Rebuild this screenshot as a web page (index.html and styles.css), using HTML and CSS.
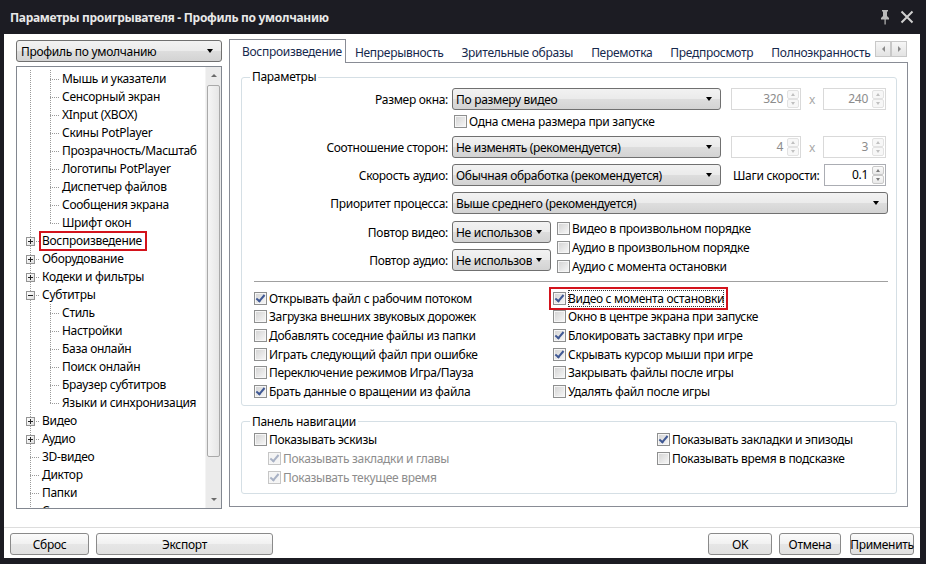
FILE: index.html
```html
<!DOCTYPE html>
<html lang="ru">
<head>
<meta charset="utf-8">
<title>Параметры проигрывателя</title>
<link rel="stylesheet" href="styles.css">
</head>
<body>
<div class="window">
  <div class="titlebar">
    <span class="title">Параметры проигрывателя - Профиль по умолчанию</span>
    <span class="tb-icons">
      <svg class="pin" width="12" height="16" viewBox="0 0 12 16"><path d="M3 1h6v1.5H8v4.5l2 2v1.5H2V9l2-2V2.5H3z" fill="#b9b9b9"/><rect x="5.5" y="10" width="1.2" height="5.5" fill="#b9b9b9"/></svg>
      <svg class="close" width="14" height="14" viewBox="0 0 14 14"><path d="M1.5 1.5L12.5 12.5M12.5 1.5L1.5 12.5" stroke="#cfcfcf" stroke-width="2"/></svg>
    </span>
  </div>
  <div class="client">
    <div class="main">
      <div class="leftcol">
        <div class="combo profile"><span class="txt">Профиль по умолчанию</span><i class="arr"></i></div>
        <div class="tree">
          <div class="tree-rows">
            <div class="row"><span class="g v"></span><span class="g t"></span><span class="lbl">Мышь и указатели</span></div>
            <div class="row"><span class="g v"></span><span class="g t"></span><span class="lbl">Сенсорный экран</span></div>
            <div class="row"><span class="g v"></span><span class="g t"></span><span class="lbl">XInput (XBOX)</span></div>
            <div class="row"><span class="g v"></span><span class="g t"></span><span class="lbl">Скины PotPlayer</span></div>
            <div class="row"><span class="g v"></span><span class="g t"></span><span class="lbl">Прозрачность/Масштаб</span></div>
            <div class="row"><span class="g v"></span><span class="g t"></span><span class="lbl">Логотипы PotPlayer</span></div>
            <div class="row"><span class="g v"></span><span class="g t"></span><span class="lbl">Диспетчер файлов</span></div>
            <div class="row"><span class="g v"></span><span class="g t"></span><span class="lbl">Сообщения экрана</span></div>
            <div class="row"><span class="g v"></span><span class="g l"></span><span class="lbl">Шрифт окон</span></div>
            <div class="row"><span class="g t"><i class="bx plus"></i></span><span class="lbl mark">Воспроизведение</span></div>
            <div class="row"><span class="g t"><i class="bx plus"></i></span><span class="lbl">Оборудование</span></div>
            <div class="row"><span class="g t"><i class="bx plus"></i></span><span class="lbl">Кодеки и фильтры</span></div>
            <div class="row"><span class="g t"><i class="bx minus"></i></span><span class="lbl">Субтитры</span></div>
            <div class="row"><span class="g v"></span><span class="g t"></span><span class="lbl">Стиль</span></div>
            <div class="row"><span class="g v"></span><span class="g t"></span><span class="lbl">Настройки</span></div>
            <div class="row"><span class="g v"></span><span class="g t"></span><span class="lbl">База онлайн</span></div>
            <div class="row"><span class="g v"></span><span class="g t"></span><span class="lbl">Поиск онлайн</span></div>
            <div class="row"><span class="g v"></span><span class="g t"></span><span class="lbl">Браузер субтитров</span></div>
            <div class="row"><span class="g v"></span><span class="g l"></span><span class="lbl">Языки и синхронизация</span></div>
            <div class="row"><span class="g t"><i class="bx plus"></i></span><span class="lbl">Видео</span></div>
            <div class="row"><span class="g t"><i class="bx plus"></i></span><span class="lbl">Аудио</span></div>
            <div class="row"><span class="g t"></span><span class="lbl">3D-видео</span></div>
            <div class="row"><span class="g t"></span><span class="lbl">Диктор</span></div>
            <div class="row"><span class="g t"></span><span class="lbl">Папки</span></div>
            <div class="row"><span class="g t"></span><span class="lbl">Связи</span></div>
          </div>
          <div class="vscroll">
            <div class="sb-btn"><i class="up"></i></div>
            <div class="thumb"></div>
            <div class="track"></div>
            <div class="sb-btn"><i class="down"></i></div>
          </div>
        </div>
      </div>

      <div class="rightcol">
        <div class="tabs">
          <div class="tabstrip">
            <div class="tab active">Воспроизведение</div>
            <div class="tab">Непрерывность</div>
            <div class="tab">Зрительные образы</div>
            <div class="tab">Перемотка</div>
            <div class="tab">Предпросмотр</div>
            <div class="tab">Полноэкранность</div>
          </div>
          <div class="tabscroll">
            <div class="ts-btn"><i class="la"></i></div>
            <div class="ts-btn"><i class="ra"></i></div>
          </div>
        </div>
        <div class="panel">
          <fieldset class="grp params">
            <legend>Параметры</legend>
            <div class="frow">
              <span class="flabel">Размер окна:</span>
              <div class="combo w269"><span class="txt">По размеру видео</span><i class="arr"></i></div>
              <div class="spin dis w70 ml10"><span class="val">320</span><span class="btns"><i class="sbu"></i><i class="sbd"></i></span></div>
              <span class="times">x</span>
              <div class="spin dis w63"><span class="val">240</span><span class="btns"><i class="sbu"></i><i class="sbd"></i></span></div>
            </div>
            <div class="cbrow">
              <label class="ck"><i class="cb"></i><span>Одна смена размера при запуске</span></label>
            </div>
            <div class="frow">
              <span class="flabel">Соотношение сторон:</span>
              <div class="combo w269"><span class="txt">Не изменять (рекомендуется)</span><i class="arr"></i></div>
              <div class="spin dis w70 ml10"><span class="val">4</span><span class="btns"><i class="sbu"></i><i class="sbd"></i></span></div>
              <span class="times">x</span>
              <div class="spin dis w63"><span class="val">3</span><span class="btns"><i class="sbu"></i><i class="sbd"></i></span></div>
            </div>
            <div class="frow">
              <span class="flabel">Скорость аудио:</span>
              <div class="combo w269"><span class="txt">Обычная обработка (рекомендуется)</span><i class="arr"></i></div>
              <span class="steps">Шаги скорости:</span>
              <div class="spin w62 push"><span class="val">0.1</span><span class="btns"><i class="sbu"></i><i class="sbd"></i></span></div>
            </div>
            <div class="frow last">
              <span class="flabel">Приоритет процесса:</span>
              <div class="combo w436"><span class="txt">Выше среднего (рекомендуется)</span><i class="arr"></i></div>
            </div>
            <div class="repeat">
              <div class="rep-left">
                <div class="frow">
                  <span class="flabel">Повтор видео:</span>
                  <div class="combo w99"><span class="txt">Не использов</span><i class="arr"></i></div>
                </div>
                <div class="frow">
                  <span class="flabel">Повтор аудио:</span>
                  <div class="combo w99"><span class="txt">Не использов</span><i class="arr"></i></div>
                </div>
              </div>
              <div class="rep-right">
                <label class="ck"><i class="cb"></i><span>Видео в произвольном порядке</span></label>
                <label class="ck"><i class="cb"></i><span>Аудио в произвольном порядке</span></label>
                <label class="ck"><i class="cb"></i><span>Аудио с момента остановки</span></label>
              </div>
            </div>
            <div class="sep"></div>
            <div class="cbgrid">
              <label class="ck"><i class="cb on"></i><span>Открывать файл с рабочим потоком</span></label>
              <label class="ck hl"><i class="cb on"></i><span class="focus">Видео с момента остановки</span></label>
              <label class="ck"><i class="cb"></i><span>Загрузка внешних звуковых дорожек</span></label>
              <label class="ck"><i class="cb"></i><span>Окно в центре экрана при запуске</span></label>
              <label class="ck"><i class="cb"></i><span>Добавлять соседние файлы из папки</span></label>
              <label class="ck"><i class="cb on"></i><span>Блокировать заставку при игре</span></label>
              <label class="ck"><i class="cb"></i><span>Играть следующий файл при ошибке</span></label>
              <label class="ck"><i class="cb on"></i><span>Скрывать курсор мыши при игре</span></label>
              <label class="ck"><i class="cb"></i><span>Переключение режимов Игра/Пауза</span></label>
              <label class="ck"><i class="cb"></i><span>Закрывать файлы после игры</span></label>
              <label class="ck"><i class="cb on"></i><span>Брать данные о вращении из файла</span></label>
              <label class="ck"><i class="cb"></i><span>Удалять файл после игры</span></label>
            </div>
          </fieldset>

          <fieldset class="grp nav">
            <legend>Панель навигации</legend>
            <div class="navgrid">
              <label class="ck"><i class="cb"></i><span>Показывать эскизы</span></label>
              <label class="ck"><i class="cb on"></i><span>Показывать закладки и эпизоды</span></label>
              <label class="ck ind disabled"><i class="cb on dis"></i><span>Показывать закладки и главы</span></label>
              <label class="ck"><i class="cb"></i><span>Показывать время в подсказке</span></label>
              <label class="ck ind disabled"><i class="cb on dis"></i><span>Показывать текущее время</span></label>
            </div>
          </fieldset>
        </div>
      </div>
    </div>

    <div class="footer">
      <button class="btn w79">Сброс</button>
      <button class="btn w177">Экспорт</button>
      <span class="spacer"></span>
      <button class="btn w64">OK</button>
      <button class="btn w62">Отмена</button>
      <button class="btn w64 apply">Применить</button>
    </div>
  </div>
</div>
</body>
</html>
```

FILE: styles.css
```css
* { box-sizing: border-box; }
html, body { margin: 0; padding: 0; }
body {
  width: 926px;
  height: 564px;
  overflow: hidden;
  background: #1c1c23;
  font-family: "Noto Sans", "Open Sans", sans-serif;
  font-size: 12px;
  letter-spacing: -0.3px;
  color: #000;
}
.window { display: flex; flex-direction: column; height: 564px; }

/* title bar */
.titlebar {
  height: 34px;
  flex: none;
  display: flex;
  align-items: center;
  padding: 0 12px 0 10px;
  color: #e8e8e8;
  font-weight: bold;
}
.title { flex: 1; }
.tb-icons { display: flex; align-items: center; gap: 9px; }

/* client */
.client {
  flex: 1;
  margin: 0 6px 6px 4px;
  background: #fff;
  display: flex;
  flex-direction: column;
}
.main {
  height: 475px;
  flex: none;
  display: flex;
  gap: 7px;
  padding: 6px 12px 0 12px;
}

/* combo */
.combo {
  height: 22px;
  flex: none;
  display: flex;
  align-items: center;
  padding-left: 3px;
  border: 1px solid #707070;
  border-radius: 3px;
  background: linear-gradient(#f2f2f2, #ebebeb 48%, #dddddd 52%, #d3d3d3);
}
.combo .txt { flex: 1; white-space: nowrap; overflow: hidden; }
.combo .arr {
  width: 0; height: 0;
  border-left: 3.5px solid transparent;
  border-right: 3.5px solid transparent;
  border-top: 4px solid #000;
  margin: 0 8px 0 4px;
}

/* left column */
.leftcol { width: 206px; flex: none; display: flex; flex-direction: column; gap: 4px; }
.profile .txt { padding-left: 1px; }
.tree {
  flex: 1;
  display: flex;
  border: 1px solid #828790;
  min-height: 0;
}
.tree-rows { flex: 1; padding: 3px 0 0 3px; overflow: hidden; }
.row { height: 18px; display: flex; align-items: center; white-space: nowrap; }
.g {
  width: 20px; height: 18px; flex: none;
  display: flex; align-items: center; justify-content: center;
}
.g.v { background: repeating-linear-gradient(to bottom, #9a9a9a 0 1px, transparent 1px 2px) 10px 0 / 1px 18px no-repeat; }
.g.t {
  background:
    repeating-linear-gradient(to bottom, #9a9a9a 0 1px, transparent 1px 2px) 10px 0 / 1px 18px no-repeat,
    repeating-linear-gradient(to right, #9a9a9a 0 1px, transparent 1px 2px) 10px 9px / 10px 1px no-repeat;
}
.g.l {
  background:
    repeating-linear-gradient(to bottom, #9a9a9a 0 1px, transparent 1px 2px) 10px 0 / 1px 9px no-repeat,
    repeating-linear-gradient(to right, #9a9a9a 0 1px, transparent 1px 2px) 10px 9px / 10px 1px no-repeat;
}
.bx {
  width: 9px; height: 9px;
  border: 1px solid #949494;
  margin-left: 1px;
}
.bx.plus {
  background:
    linear-gradient(#222, #222) center / 5px 1px no-repeat,
    linear-gradient(#222, #222) center / 1px 5px no-repeat,
    linear-gradient(135deg, #fff, #dedede);
}
.bx.minus {
  background:
    linear-gradient(#222, #222) center / 5px 1px no-repeat,
    linear-gradient(135deg, #fff, #dedede);
}
.lbl { padding: 0 2px; line-height: 18px; }
.lbl.mark { outline: 2px solid #d3131c; outline-offset: -1px; padding: 0 4px 0 2px; }

.vscroll {
  width: 16px; flex: none;
  display: flex; flex-direction: column;
  background: #ebebeb;
  border-left: 1px solid #f4f4f4;
}
.sb-btn { height: 17px; flex: none; display: flex; align-items: center; justify-content: center; }
.sb-btn .up { width: 0; height: 0; border-left: 3px solid transparent; border-right: 3px solid transparent; border-bottom: 3px solid #6b6b6b; }
.sb-btn .down { width: 0; height: 0; border-left: 3px solid transparent; border-right: 3px solid transparent; border-top: 3px solid #6b6b6b; }
.thumb {
  height: 372px; flex: none;
  margin: 1px 1px 0 1px;
  border: 1px solid #a9a9a9;
  border-radius: 2px;
  background: linear-gradient(to right, #f5f5f5, #e6e6e6);
}
.track { flex: 1; }

/* right column */
.rightcol { width: 679px; flex: none; display: flex; flex-direction: column; margin-top: -1px; }
.tabs { height: 23px; flex: none; display: flex; align-items: flex-end; }
.tabstrip { flex: 1; display: flex; align-items: flex-end; overflow: hidden; min-width: 0; height: 24px; margin-bottom: -1px; }
.tab {
  flex: none;
  height: 22px;
  padding: 0 9px;
  display: flex; align-items: center;
  color: #16294d;
  white-space: nowrap;
}
.tab.active {
  height: 24px;
  padding: 0 3px 0 12px;
  border: 1px solid #898c95;
  border-bottom: none;
  background: #fff;
  position: relative;
  z-index: 1;
}
.tabscroll { display: flex; align-self: flex-start; margin: 2px 1px 0 2px; }
.ts-btn {
  width: 16px; height: 16px;
  border: 1px solid #c8c8c8;
  background: linear-gradient(#f6f6f6, #e3e3e3);
  display: flex; align-items: center; justify-content: center;
}
.ts-btn .la { width: 0; height: 0; border-top: 3px solid transparent; border-bottom: 3px solid transparent; border-right: 3px solid #8a8a8a; }
.ts-btn .ra { width: 0; height: 0; border-top: 3px solid transparent; border-bottom: 3px solid transparent; border-left: 3px solid #8a8a8a; }

.panel {
  height: 445px;
  flex: none;
  border: 1px solid #898c95;
  background: #fff;
  padding: 6px 10px 0 11px;
  display: flex;
  flex-direction: column;
  gap: 8px;
}
.grp {
  margin: 0;
  min-width: 0;
  border: 1px solid #d5dfe5;
  border-radius: 3px;
}
.grp legend { margin-left: 8px; padding: 0 2px; line-height: 16px; }
.params { padding: 3px 8px 4px 0; }
.nav { padding: 0 8px 6px 0; }

.frow { display: flex; align-items: center; height: 22px; margin-bottom: 6px; }
.frow.last { margin-bottom: 7px; }
.flabel { width: 206px; flex: none; text-align: right; margin-right: 4px; white-space: nowrap; }
.w269 { width: 269px; }
.w436 { width: 436px; }
.w99 { width: 99px; }
.w70 { width: 70px; }
.w63 { width: 63px; }
.w62 { width: 62px; }
.ml10 { margin-left: 10px; }
.times { width: 22px; text-align: center; color: #a8a8a8; }
.steps { margin-left: 12px; white-space: nowrap; }
.push { margin-left: auto; margin-right: 2px; }

.spin {
  height: 22px; flex: none;
  display: flex;
  border: 1px solid #abadb3;
  background: #fff;
  padding: 1px;
}
.spin.dis { border-color: #d9d9d9; }
.spin .val { flex: 1; text-align: right; padding-right: 4px; line-height: 18px; }
.spin.dis .val { color: #8c8c8c; }
.spin .btns { width: 12px; display: flex; flex-direction: column; }
.spin .btns i {
  flex: 1;
  border: 1px solid #c9c9c9;
  border-radius: 2px;
  background: linear-gradient(#fafafa, #e9e9e9);
  display: flex; align-items: center; justify-content: center;
}
.spin.dis .btns i { border-color: #e2e2e2; background: #f7f7f7; }
.spin .btns .sbu::after { content: ""; border-left: 2.5px solid transparent; border-right: 2.5px solid transparent; border-bottom: 3px solid #7a7a7a; }
.spin .btns .sbd::after { content: ""; border-left: 2.5px solid transparent; border-right: 2.5px solid transparent; border-top: 3px solid #7a7a7a; }
.spin.dis .btns .sbu::after { border-bottom-color: #c0c0c0; }
.spin.dis .btns .sbd::after { border-top-color: #c0c0c0; }

.cbrow { height: 26px; margin-top: -6px; padding: 0 0 4px 212px; display: flex; align-items: center; }

.ck { display: flex; align-items: center; white-space: nowrap; gap: 2px; }
.cb {
  width: 13px; height: 13px; flex: none;
  border: 1px solid #8e8f8f;
  background: linear-gradient(135deg, #d2d2d2, #f8f8f8);
  box-shadow: inset 0 0 0 1px #f6f6f6;
  display: inline-flex; align-items: center; justify-content: center;
}
.cb.on::after {
  content: "";
  width: 3px; height: 7px;
  border: solid #3f5894;
  border-width: 0 2px 2px 0;
  transform: translateY(-1px) rotate(40deg);
}
.cb.dis { border-color: #c6c6c6; background: #f4f4f4; }
.cb.dis.on::after { border-color: #a8b1c4; }
.ck.disabled { color: #8d8d8d; }

.repeat { display: flex; height: 50px; }
.rep-left .frow:last-child { margin-bottom: 0; }
.rep-right { margin: -2px 0 0 6px; display: flex; flex-direction: column; }
.rep-right .ck { height: 19px; flex: none; }

.sep { margin: 10px 0 0 12px; border-top: 1px solid #a0a0a0; }

.cbgrid {
  display: grid;
  grid-template-columns: 299px 1fr;
  grid-auto-rows: 18.6px;
  margin: 7px 0 0 12px;
}
.ck.hl {
  justify-self: start;
  margin-left: -2px;
  padding: 0 2px;
  outline: 2px solid #d3131c;
}
.focus { outline: 1px dotted #333; outline-offset: -1px; }

.navgrid {
  display: grid;
  grid-template-columns: 403px 1fr;
  grid-auto-rows: 19px;
  margin-left: 12px;
}
.ck.ind { padding-left: 14px; }

/* footer */
.footer {
  flex: 1;
  margin-top: 18px;
  border-top: 1px solid #dddddd;
  padding: 5px 6px 3px 6px;
  display: flex;
  align-items: flex-start;
  gap: 7px;
}
.spacer { flex: 1; }
.btn {
  height: 22px;
  padding: 0;
  font: inherit;
  letter-spacing: inherit;
  color: #000;
  border: 1px solid #8a8a8a;
  border-radius: 3px;
  background: linear-gradient(#fbfbfb, #f1f1f1 48%, #e6e6e6 52%, #e0e0e0);
  display: flex; align-items: center; justify-content: center;
}
.w79 { width: 79px; }
.w177 { width: 177px; }
.w64 { width: 64px; }
.apply { margin-left: 2px; }
```
